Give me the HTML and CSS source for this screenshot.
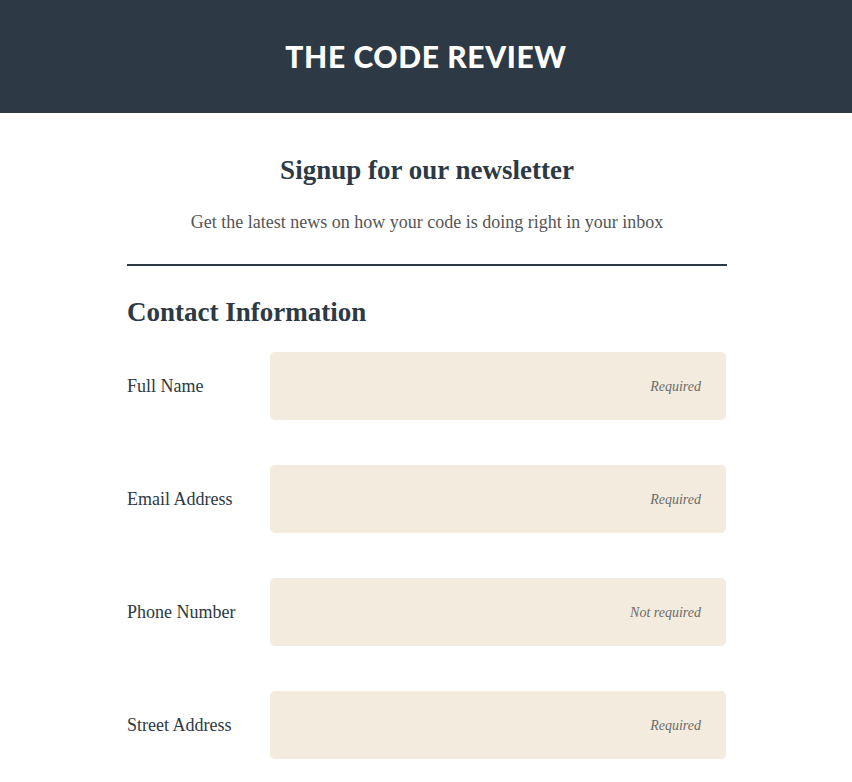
FILE: index.html
```html
<!DOCTYPE html>
<html>
<head>
<meta charset="utf-8">
<link rel="stylesheet" href="styles.css">
</head>
<body>
<header class="masthead">
  <div class="brand">THE CODE REVIEW</div>
</header>
<main class="container">
  <section class="intro">
    <h1 class="intro-title">Signup for our newsletter</h1>
    <p class="intro-text">Get the latest news on how your code is doing right in your inbox</p>
  </section>
  <hr class="divider">
  <h2 class="section-title">Contact Information</h2>
  <form class="form">
    <div class="row">
      <label class="label">Full Name</label>
      <div class="field"><span class="hint">Required</span></div>
    </div>
    <div class="row">
      <label class="label">Email Address</label>
      <div class="field"><span class="hint">Required</span></div>
    </div>
    <div class="row">
      <label class="label">Phone Number</label>
      <div class="field"><span class="hint">Not required</span></div>
    </div>
    <div class="row">
      <label class="label">Street Address</label>
      <div class="field"><span class="hint">Required</span></div>
    </div>
  </form>
</main>
</body>
</html>
```
FILE: styles.css
```css
html, body {
  margin: 0;
  padding: 0;
  background: #ffffff;
}
body {
  font-family: "Liberation Serif", "Times New Roman", serif;
  color: #2d3944;
}
.masthead {
  height: 113px;
  background: #2d3944;
  display: flex;
  align-items: center;
  justify-content: center;
}
.brand {
  font-family: "Lato", "Open Sans", sans-serif;
  font-weight: 900;
  font-size: 30px;
  color: #ffffff;
  letter-spacing: 0.6px;
  padding-bottom: 2px;
}
.container {
  width: 600px;
  margin-left: calc(50% - 299px);
}
.intro {
  text-align: center;
  padding-top: 41px;
}
.intro-title {
  margin: 0;
  font-size: 27px;
  font-weight: bold;
  line-height: 32px;
  color: #2d3944;
}
.intro-text {
  margin: 26px 0 0;
  font-size: 18px;
  line-height: 20px;
  color: #555555;
}
.divider {
  margin: 32px 0 0;
  border: 0;
  height: 2px;
  background: #2d3944;
}
.section-title {
  margin: 30px 0 0;
  font-size: 27px;
  font-weight: bold;
  line-height: 32px;
  color: #2d3944;
}
.form {
  margin-top: 24px;
  padding-right: 1px;
  display: flex;
  flex-direction: column;
  gap: 45px;
}
.row {
  display: flex;
  align-items: center;
}
.label {
  width: 143px;
  font-size: 18px;
  color: #2d3944;
}
.field {
  flex: 1;
  height: 68px;
  background: #f3ebdd;
  border-radius: 5px;
  display: flex;
  align-items: center;
  justify-content: flex-end;
  padding-right: 25px;
  padding-top: 2px;
  box-sizing: border-box;
}
.hint {
  font-style: italic;
  font-size: 14px;
  color: #6b6b6b;
}
```
